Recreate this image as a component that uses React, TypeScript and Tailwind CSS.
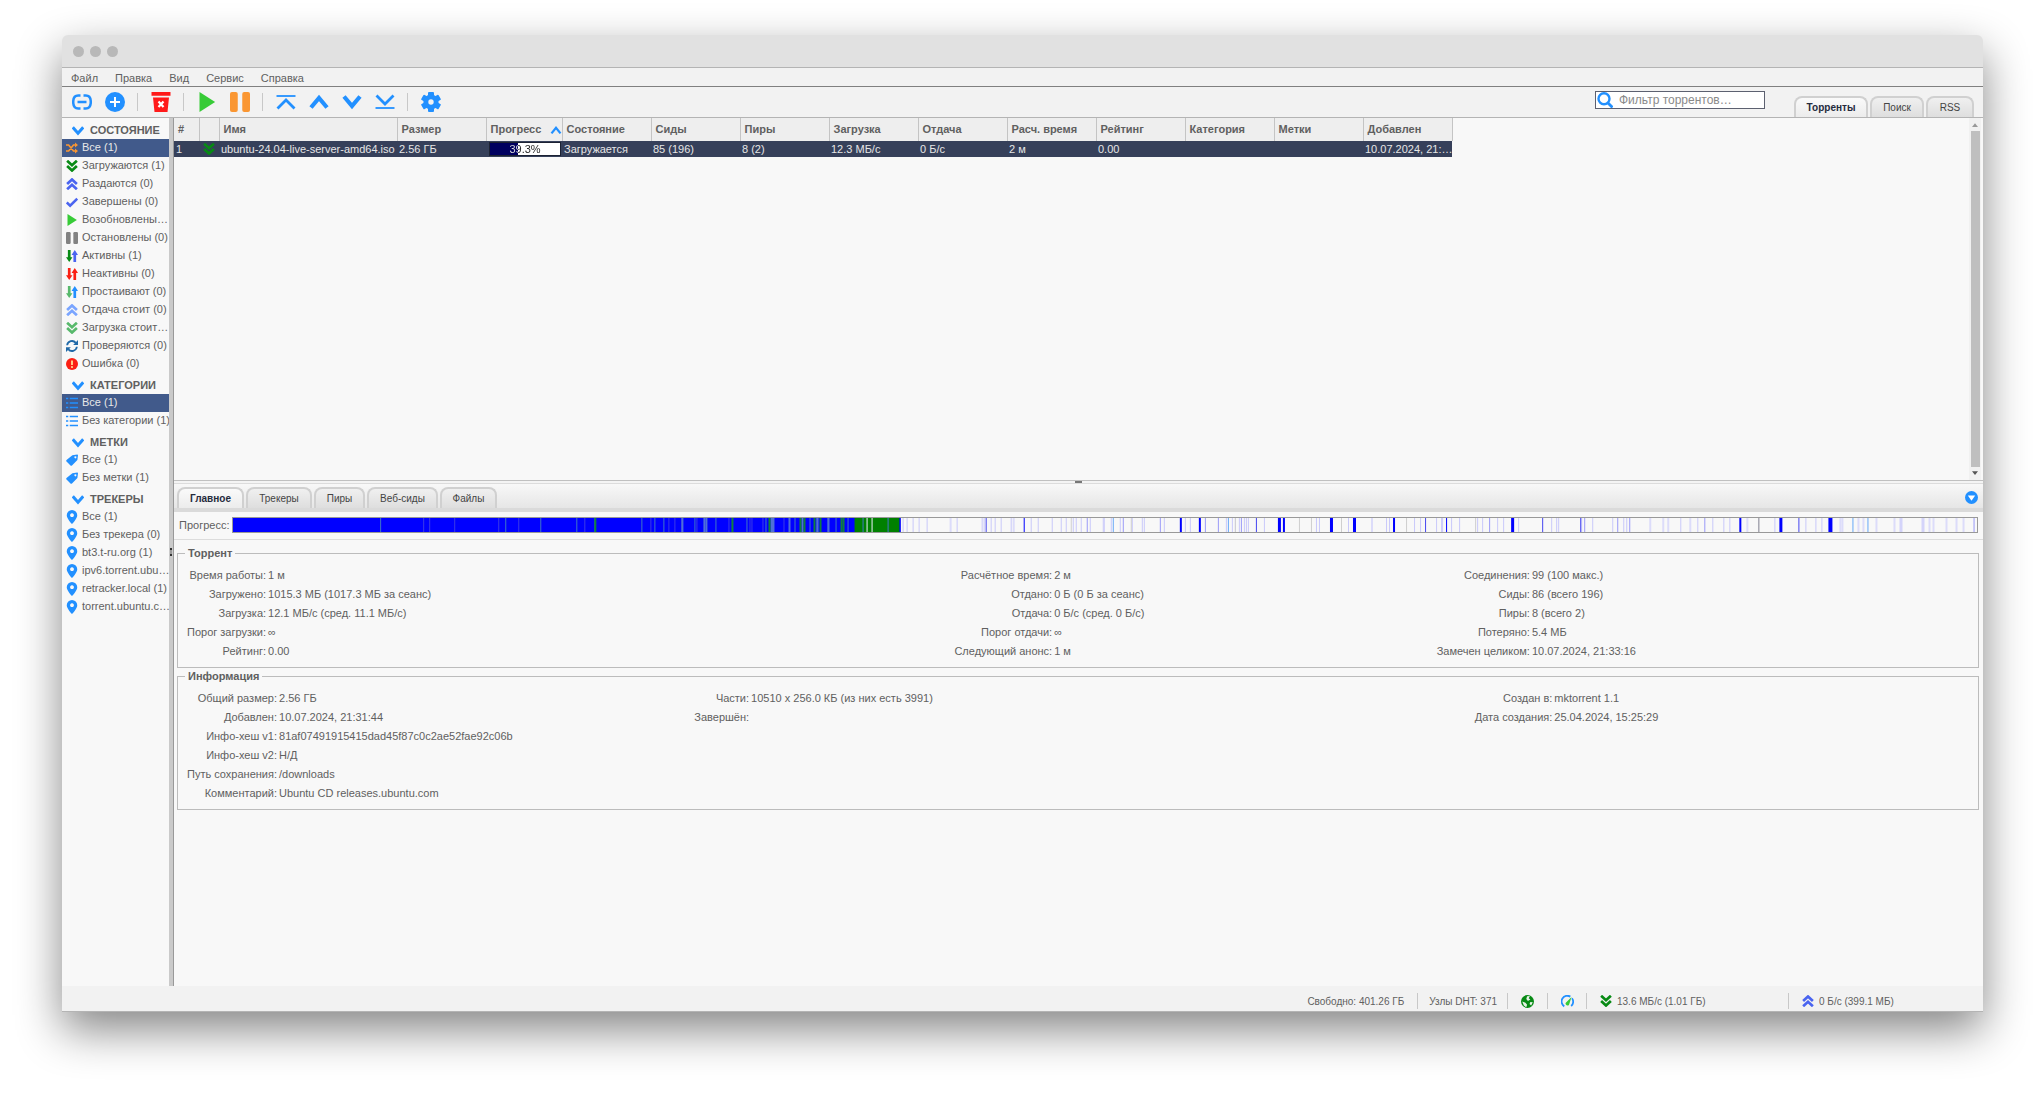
import type { ReactNode } from "react";
import clsx from "clsx";

/* ---------- icons ---------- */

function Svg({
  className,
  children,
  box = 16,
}: {
  className?: string;
  children: ReactNode;
  box?: number;
}) {
  return (
    <svg
      aria-hidden
      viewBox={`0 0 ${box} ${box}`}
      className={clsx("shrink-0", className)}
      fill="none"
    >
      {children}
    </svg>
  );
}

const BLUE = "#2290ff";

function Chevrons({ color, up }: { color: string; up?: boolean }) {
  return (
    <Svg className="h-3 w-3">
      <path
        d={
          up
            ? "M1.500 8 8 2l6.500 6M1.500 15 8 9l6.500 6"
            : "M1.500 1 8 7l6.500-6M1.500 8 8 14l6.500-6"
        }
        stroke={color}
        strokeWidth="3.600"
      />
    </Svg>
  );
}

function UpDown({ down, up }: { down: string; up: string }) {
  return (
    <Svg className="h-3 w-3">
      <path d="M2.500 0h3.600v9.500H8.600L4.300 16 0 9.500h2.500z" fill={down} />
      <path d="M9.900 16h3.600V6.500H16L11.700 0 7.400 6.500h2.500z" fill={up} />
    </Svg>
  );
}

function Play({ className = "h-3 w-3" }: { className?: string }) {
  return (
    <Svg className={className}>
      <path d="M2 0v16l12.500-8z" fill="#37cb37" />
    </Svg>
  );
}

function Pause({ color, className = "h-3 w-3" }: { color: string; className?: string }) {
  return (
    <Svg className={className}>
      <rect x="0" y="0" width="6.200" height="16" rx="1.600" fill={color} />
      <rect x="9.800" y="0" width="6.200" height="16" rx="1.600" fill={color} />
    </Svg>
  );
}

function Shuffle() {
  return (
    <Svg className="h-3 w-3">
      <path
        d="M0 4h3.500L10 12h3M0 12h3.500L10 4h3"
        stroke="#fa9632"
        strokeWidth="2.200"
      />
      <path d="M12 .8 16 4l-4 3.200zM12 8.800 16 12l-4 3.200z" fill="#fa9632" />
    </Svg>
  );
}

function Check() {
  return (
    <Svg className="h-3 w-3">
      <path d="M1 8.500 5.500 13 15 3.500" stroke="#4a64f0" strokeWidth="3.400" />
    </Svg>
  );
}

function Sync() {
  return (
    <Svg className="h-3 w-3">
      <path
        d="M1.500 7A6.500 6.500 0 0 1 13 3.800M14.500 9A6.500 6.500 0 0 1 3 12.200"
        stroke="#2069a8"
        strokeWidth="2.400"
      />
      <path d="M16 0v6.500H9.500zM0 16V9.500h6.500z" fill="#2069a8" />
    </Svg>
  );
}

function ErrorMark() {
  return (
    <Svg className="h-3 w-3">
      <circle cx="8" cy="8" r="8" fill="#fb2014" />
      <path d="M8 3.200v6" stroke="#fff0a0" strokeWidth="2.200" />
      <circle cx="8" cy="12" r="1.300" fill="#fff0a0" />
    </Svg>
  );
}

function List() {
  return (
    <Svg className="h-3 w-3">
      <path
        d="M0 2h3M5 2h11M0 8h3M5 8h11M0 14h3M5 14h11"
        stroke={BLUE}
        strokeWidth="2"
      />
    </Svg>
  );
}

function Tag() {
  return (
    <Svg className="h-3 w-3">
      <path
        fillRule="evenodd"
        d="M8.500 1.500 15 .8q1 0 1 1L15.200 8 8 15.200q-1 .8-2 0L.7 10q-.9-1 0-2zM12.500 3a1.300 1.300 0 1 0 .01 0z"
        fill={BLUE}
      />
    </Svg>
  );
}

function Pin() {
  return (
    <Svg className="-mx-px h-[14px] w-[14px]">
      <path
        fillRule="evenodd"
        d="M8 0a6 6 0 0 1 6 6c0 4-6 10-6 10S2 10 2 6a6 6 0 0 1 6-6zm0 3.700a2.200 2.200 0 1 0 .01 0z"
        fill={BLUE}
      />
    </Svg>
  );
}

function Globe() {
  return (
    <Svg className="h-[13px] w-[13px]">
      <circle cx="8" cy="8" r="8" fill="#078a14" />
      <path
        d="M7.500 1.500 11 1.200 9.500 4 11.500 5.500 8.500 7.500 6.500 5zM1.500 8l4 1.500 2 2.500-1 3-3-2zM11.500 8.500l3 .5-2 4-2-2z"
        fill="#e6f2e6"
      />
    </Svg>
  );
}

function Gauge() {
  return (
    <Svg className="h-[13px] w-[13px]">
      <path
        d="M4 14A6.800 6.800 0 0 1 11.500 2M13.500 4A6.800 6.800 0 0 1 12.500 13.500"
        stroke={BLUE}
        strokeWidth="2.200"
      />
      <path d="M13 2.500 10.200 11A2.200 2.200 0 1 1 6.500 9z" fill="#37cb37" />
    </Svg>
  );
}

function LinkIcon() {
  return (
    <Svg className="h-5 w-5" box={20}>
      <path
        d="M8.500 3.500H6.200Q1.200 3.500 1.200 10t5 6.500h2.300M11.500 3.500h2.300q5 0 5 6.500t-5 6.500h-2.300M5.500 10h9"
        stroke={BLUE}
        strokeWidth="2.500"
      />
    </Svg>
  );
}

function AddIcon() {
  return (
    <Svg className="h-5 w-5" box={20}>
      <circle cx="10" cy="10" r="10" fill={BLUE} />
      <path d="M10 5v10M5 10h10" stroke="#fff" strokeWidth="2" />
    </Svg>
  );
}

function TrashIcon() {
  return (
    <Svg className="h-5 w-5" box={20}>
      <path d="M.5 0h19v3.800H.5zM2 5.500h16L16.500 20h-13z" fill="#ff1a1a" />
      <path d="M7.500 9.500l5 5.500M12.500 9.500l-5 5.500" stroke="#fff" strokeWidth="2.200" />
    </Svg>
  );
}

function MoveIcon({ d, thin }: { d: string; thin?: string }) {
  return (
    <Svg className="h-5 w-5" box={20}>
      <path d={d} stroke={BLUE} strokeWidth={thin ? 2.8 : 4.2} />
      {thin && <path d={thin} stroke={BLUE} strokeWidth="1.800" />}
    </Svg>
  );
}

function GearIcon() {
  return (
    <Svg className="h-5 w-5" box={20}>
      <g fill={BLUE}>
        <rect x="7" y="0" width="6" height="20" rx="1" />
        <rect x="7" y="0" width="6" height="20" rx="1" transform="rotate(60 10 10)" />
        <rect x="7" y="0" width="6" height="20" rx="1" transform="rotate(120 10 10)" />
        <circle cx="10" cy="10" r="7.600" />
      </g>
      <circle cx="10" cy="10" r="2.700" fill="#f2f2f2" />
    </Svg>
  );
}

function SearchIcon() {
  return (
    <Svg className="ml-px h-4 w-4">
      <circle cx="7" cy="6.800" r="5.500" stroke={BLUE} strokeWidth="2.400" />
      <path d="M11 11l4.500 4.500" stroke={BLUE} strokeWidth="2.800" />
    </Svg>
  );
}

/* ---------- data ---------- */

type Item = { icon: ReactNode; label: string; selected?: boolean };

const filters: { title: string; items: Item[] }[] = [
  {
    title: "СОСТОЯНИЕ",
    items: [
      { icon: <Shuffle />, label: "Все (1)", selected: true },
      { icon: <Chevrons color="#078a14" />, label: "Загружаются (1)" },
      { icon: <Chevrons color="#4a64f0" up />, label: "Раздаются (0)" },
      { icon: <Check />, label: "Завершены (0)" },
      { icon: <Play />, label: "Возобновлены…" },
      { icon: <Pause color="#828282" />, label: "Остановлены (0)" },
      { icon: <UpDown down="#078a14" up="#4a64f0" />, label: "Активны (1)" },
      { icon: <UpDown down="#fb2014" up="#fb2014" />, label: "Неактивны (0)" },
      { icon: <UpDown down="#58b96c" up={BLUE} />, label: "Простаивают (0)" },
      { icon: <Chevrons color="#7aa5ff" up />, label: "Отдача стоит (0)" },
      { icon: <Chevrons color="#58b96c" />, label: "Загрузка стоит…" },
      { icon: <Sync />, label: "Проверяются (0)" },
      { icon: <ErrorMark />, label: "Ошибка (0)" },
    ],
  },
  {
    title: "КАТЕГОРИИ",
    items: [
      { icon: <List />, label: "Все (1)", selected: true },
      { icon: <List />, label: "Без категории (1)" },
    ],
  },
  {
    title: "МЕТКИ",
    items: [
      { icon: <Tag />, label: "Все (1)" },
      { icon: <Tag />, label: "Без метки (1)" },
    ],
  },
  {
    title: "ТРЕКЕРЫ",
    items: [
      { icon: <Pin />, label: "Все (1)" },
      { icon: <Pin />, label: "Без трекера (0)" },
      { icon: <Pin />, label: "bt3.t-ru.org (1)" },
      { icon: <Pin />, label: "ipv6.torrent.ubu…" },
      { icon: <Pin />, label: "retracker.local (1)" },
      { icon: <Pin />, label: "torrent.ubuntu.c…" },
    ],
  },
];

const toolbar: ({ label: string; icon: ReactNode } | null)[] = [
  { label: "Добавить ссылку", icon: <LinkIcon /> },
  { label: "Добавить файл", icon: <AddIcon /> },
  null,
  { label: "Удалить", icon: <TrashIcon /> },
  null,
  { label: "Возобновить", icon: <Play className="h-5 w-5" /> },
  { label: "Остановить", icon: <Pause color="#fa9632" className="h-5 w-5" /> },
  null,
  {
    label: "В начало очереди",
    icon: <MoveIcon d="M1.500 16.500 10 8l8.500 8.500" thin="M.5 4h19" />,
  },
  { label: "Вверх по очереди", icon: <MoveIcon d="M2 15.500 10 6l8 9.500" /> },
  { label: "Вниз по очереди", icon: <MoveIcon d="M2 4.500 10 14l8-9.500" /> },
  {
    label: "В конец очереди",
    icon: <MoveIcon d="M1.500 3.500 10 12l8.500-8.500" thin="M.5 16h19" />,
  },
  null,
  { label: "Настройки", icon: <GearIcon /> },
];

const columns: { title: string; value?: string }[] = [
  { title: "Сиды", value: "85 (196)" },
  { title: "Пиры", value: "8 (2)" },
  { title: "Загрузка", value: "12.3 МБ/с" },
  { title: "Отдача", value: "0 Б/с" },
  { title: "Расч. время", value: "2 м" },
  { title: "Рейтинг", value: "0.00" },
  { title: "Категория" },
  { title: "Метки" },
  { title: "Добавлен", value: "10.07.2024, 21:…" },
];

const torrentInfo: [string, string][][] = [
  [
    ["Время работы:", "1 м"],
    ["Загружено:", "1015.3 МБ (1017.3 МБ за сеанс)"],
    ["Загрузка:", "12.1 МБ/с (сред. 11.1 МБ/с)"],
    ["Порог загрузки:", "∞"],
    ["Рейтинг:", "0.00"],
  ],
  [
    ["Расчётное время:", "2 м"],
    ["Отдано:", "0 Б (0 Б за сеанс)"],
    ["Отдача:", "0 Б/с (сред. 0 Б/с)"],
    ["Порог отдачи:", "∞"],
    ["Следующий анонс:", "1 м"],
  ],
  [
    ["Соединения:", "99 (100 макс.)"],
    ["Сиды:", "86 (всего 196)"],
    ["Пиры:", "8 (всего 2)"],
    ["Потеряно:", "5.4 МБ"],
    ["Замечен целиком:", "10.07.2024, 21:33:16"],
  ],
];

const generalInfo: [string, string][][] = [
  [
    ["Общий размер:", "2.56 ГБ"],
    ["Добавлен:", "10.07.2024, 21:31:44"],
    ["Инфо-хеш v1:", "81af07491915415dad45f87c0c2ae52fae92c06b"],
    ["Инфо-хеш v2:", "Н/Д"],
    ["Путь сохранения:", "/downloads"],
    ["Комментарий:", "Ubuntu CD releases.ubuntu.com"],
  ],
  [
    ["Части:", "10510 x 256.0 КБ (из них есть 3991)"],
    ["Завершён:", ""],
  ],
  [
    ["Создан в:", "mktorrent 1.1"],
    ["Дата создания:", "25.04.2024, 15:25:29"],
  ],
];

// piece map: start positions grouped by colour and width, out of 1742
const pieces: { fill: string; width: number; at: number[] }[] = [
  { fill: "#0000ff", width: 667, at: [0] },
  { fill: "#008000", width: 45, at: [621] },
  {
    fill: "#3a3ae6",
    width: 1,
    at: [190, 196, 221, 265, 285, 351, 417, 435, 441, 448, 463, 495, 516, 518, 529, 550],
  },
  {
    fill: "#3f76c4",
    width: 1,
    at: [147, 272, 307, 343, 361, 408, 421, 430, 461, 482, 513, 532, 561, 576, 583, 594, 602, 614, 629, 654],
  },
  { fill: "#4f6fd8", width: 2, at: [448, 470, 472, 555, 568, 583, 594] },
  { fill: "#4f6fd8", width: 4, at: [537] },
  { fill: "#10803c", width: 2, at: [361, 498, 535, 566, 570, 580, 586, 607, 609] },
  { fill: "#f0f0ff", width: 1, at: [633, 638] },
  { fill: "#0000ff", width: 1, at: [666] },
  {
    fill: "#c9c9fa",
    width: 1,
    at: [
      669, 673, 679, 685, 693, 723, 748, 750, 757, 761, 767, 777, 797, 804, 818, 827,
      832, 839, 842, 847, 856, 869, 870, 877, 886, 898, 908, 910, 930, 951, 956, 992,
      998, 1001, 1005, 1010, 1012, 1014, 1030, 1082, 1085, 1114, 1152, 1155, 1180,
      1186, 1202, 1207, 1208, 1217, 1225, 1243, 1248, 1263, 1269, 1284, 1317, 1322,
      1324, 1347, 1358, 1378, 1389, 1392, 1446, 1463, 1478, 1489, 1495,
      1540, 1571, 1581, 1587,
    ],
  },
  {
    fill: "#dcdcfa",
    width: 2,
    at: [
      716, 779, 1137, 1415, 1428, 1433, 1455, 1512, 1605, 1607, 1623, 1628, 1641,
      1659, 1694, 1698, 1711, 1721, 1728,
    ],
  },
  { fill: "#d4d4fa", width: 3, at: [1665, 1687] },
  { fill: "#cfcfcf", width: 1, at: [837, 897, 1001, 1065, 1077, 1107, 1172, 1241] },
  {
    fill: "#9a9af8",
    width: 1,
    at: [853, 889, 926, 971, 984, 1007, 1255, 1350, 1383, 1395, 1470, 1739],
  },
  { fill: "#66a8f8", width: 1, at: [879, 994, 1618, 1633] },
  { fill: "#4646f0", width: 1, at: [752, 1022, 1191, 1308, 1346, 1564] },
  { fill: "#0000ff", width: 1, at: [790, 1212] },
  { fill: "#0000ff", width: 2, at: [946, 965, 1049, 1159, 1505] },
  { fill: "#0000ff", width: 3, at: [1044, 1096, 1119, 1277, 1545] },
  { fill: "#0000ff", width: 4, at: [1594] },
  { fill: "#808090", width: 1, at: [1524] },
];

/* ---------- parts ---------- */

function Tab({
  label,
  active,
  size,
}: {
  label: string;
  active?: boolean;
  size: string;
}) {
  return (
    <button
      type="button"
      role="tab"
      aria-selected={!!active}
      className={clsx(
        "rounded-t-lg border-2 border-b-0 text-center text-[10px] leading-3",
        size,
        active
          ? "border-[#d0d0d0] bg-linear-to-b from-[#fafafa] to-[#ececec] font-bold text-[#252b3d]"
          : "border-[#d0d0d0] bg-linear-to-b from-[#f0f0f0] to-[#dedede] text-[#444]"
      )}
    >
      {label}
    </button>
  );
}

function FilterSection({ title, items }: { title: string; items: Item[] }) {
  return (
    <section>
      <h2 className="flex h-[21px] items-center gap-[6px] pt-1 pl-[10px] text-[11px] font-bold">
        <Svg className="h-3 w-3">
          <path d="M1 3 8 11l7-8" stroke={BLUE} strokeWidth="4" />
        </Svg>
        {title}
      </h2>
      <ul>
        {items.map((item) => (
          <li key={item.label}>
            <a
              href="#"
              className={clsx(
                "flex h-[18px] items-center gap-1 pl-1 whitespace-nowrap",
                item.selected && "bg-[#415a8b] text-[#e8e8e8]"
              )}
            >
              {item.icon}
              <span className="pb-px">{item.label}</span>
            </a>
          </li>
        ))}
      </ul>
    </section>
  );
}

function InfoBox({
  title,
  groups,
  grid,
}: {
  title: string;
  groups: [string, string][][];
  grid: string;
}) {
  return (
    <fieldset className="border border-[#bcbcbc] pb-[6px]">
      <legend className="ml-[7px] px-[3px] text-[11px] leading-3 font-bold">
        {title}
      </legend>
      <div className={clsx("grid items-start pt-[7px] pl-[9px]", grid)}>
        {groups.map((rows, i) => (
          <dl
            key={i}
            className="grid grid-cols-[auto_1fr] gap-x-[2px] leading-[19px] whitespace-nowrap"
          >
            {rows.map(([term, value]) => (
              <div key={term} className="contents">
                <dt className="text-right">{term}</dt>
                <dd>{value}</dd>
              </div>
            ))}
          </dl>
        ))}
      </div>
    </fieldset>
  );
}

function ProgressCell({ percent }: { percent: number }) {
  return (
    <div
      className="mr-px ml-[3px] h-[14px] border border-[#1c2233]"
      style={{
        background: `linear-gradient(90deg, #00005f ${percent}%, #fff ${percent}%)`,
      }}
    >
      <span
        className="block bg-clip-text text-center leading-3 text-transparent"
        style={{
          backgroundImage: `linear-gradient(90deg, #e0e0e0 ${percent}%, #222 ${percent}%)`,
        }}
      >
        {percent}%
      </span>
    </div>
  );
}

function TorrentTable() {
  const th = "border-r border-[#c4c4c4] pl-1 text-left font-bold";
  return (
    <table className="table-fixed border-collapse self-start whitespace-nowrap">
      <thead>
        <tr className="h-[23px] bg-[#eee]">
          <th className={clsx(th, "w-[25px]")}>#</th>
          <th className={clsx(th, "w-5")} aria-label="Значок" />
          <th className={clsx(th, "w-[178px]")}>Имя</th>
          <th className={clsx(th, "w-[89px]")}>Размер</th>
          <th className={clsx(th, "w-[76px]")}>
            <span className="flex items-center justify-between">
              Прогресс
              <Svg className="h-3 w-3">
                <path d="M2 12.500 8 5l6 7.500" stroke={BLUE} strokeWidth="3" />
              </Svg>
            </span>
          </th>
          <th className={clsx(th, "w-[89px]")}>Состояние</th>
          {columns.map((c) => (
            <th key={c.title} className={clsx(th, "w-[89px]")}>
              {c.title}
            </th>
          ))}
        </tr>
      </thead>
      <tbody>
        <tr className="h-4 bg-[#36405a] leading-4 text-[#e6e6e6]">
          <td className="pl-[2px]">1</td>
          <td className="pl-1">
            <Chevrons color="#078a14" />
          </td>
          <td className="pl-[2px]">ubuntu-24.04-live-server-amd64.iso</td>
          <td className="pl-[2px]">2.56 ГБ</td>
          <td>
            <ProgressCell percent={39.3} />
          </td>
          <td className="pl-[2px]">Загружается</td>
          {columns.map((c) => (
            <td key={c.title} className="pl-[2px]">
              {c.value}
            </td>
          ))}
        </tr>
      </tbody>
    </table>
  );
}

function Scrollbar() {
  return (
    <div
      aria-hidden
      className="flex w-3 shrink-0 flex-col items-center justify-between bg-[#f1f1f1] py-1"
    >
      <Svg className="h-[6px] w-[6px]">
        <path d="M8 3l8 10H0z" fill="#999" />
      </Svg>
      <div className="my-[3px] w-[9px] flex-1 bg-[#bfbfbf]" />
      <Svg className="h-[6px] w-[6px]">
        <path d="M8 13 0 3h16z" fill="#555" />
      </Svg>
    </div>
  );
}

/* ---------- page ---------- */

export default function App() {
  return (
    <div className="flex min-h-screen flex-col bg-white pt-[35px] pr-[61px] pb-[88px] pl-[62px] font-['Liberation_Sans',Arial,sans-serif] text-[11px] text-[#606060]">
      <div className="flex flex-1 flex-col rounded-t-md bg-[#f2f2f2] shadow-[0_18px_45px_rgba(0,0,0,0.48)]">
        {/* Title bar */}
        <div className="flex h-[33px] items-center gap-[6px] rounded-t-md border-b border-[#b4b4b4] bg-[#e1e1e1] pl-[11px]">
          <span className="h-[11px] w-[11px] rounded-full bg-[#b8b8b8]" />
          <span className="h-[11px] w-[11px] rounded-full bg-[#b8b8b8]" />
          <span className="h-[11px] w-[11px] rounded-full bg-[#b8b8b8]" />
        </div>

        {/* Menu */}
        <nav className="flex h-[19px] items-center gap-[17px] border-b border-[#808080] pt-[2px] pl-[9px]">
          <a href="#">Файл</a>
          <a href="#">Правка</a>
          <a href="#">Вид</a>
          <a href="#">Сервис</a>
          <a href="#">Справка</a>
        </nav>

        {/* Toolbar */}
        <div className="flex h-[31px] justify-between border-b border-[#b4b4b4]">
          <div className="flex items-center pl-[3px]">
            {toolbar.map((entry, i) =>
              entry ? (
                <button
                  key={entry.label}
                  type="button"
                  aria-label={entry.label}
                  className="flex w-[33px] justify-center"
                >
                  {entry.icon}
                </button>
              ) : (
                <span key={i} className="mx-[6px] h-[18px] w-px bg-[#c8c8c8]" />
              )
            )}
          </div>
          <div className="flex items-end pr-[9px]">
            <label className="mr-[29px] mb-2 flex h-[18px] w-[170px] items-center border border-[#5c6070] bg-white">
              <SearchIcon />
              <input
                type="text"
                aria-label="Фильтр торрентов"
                placeholder="Фильтр торрентов…"
                className="ml-[6px] w-full min-w-0 text-xs outline-none placeholder:text-[#8a8a8a]"
              />
            </label>
            <div role="tablist" className="flex items-end gap-[2px]">
              <Tab label="Торренты" active size="h-[21px] w-[74px]" />
              <Tab label="Поиск" size="h-[21px] w-[54px]" />
              <Tab label="RSS" size="h-[21px] w-[48px]" />
            </div>
          </div>
        </div>

        <div className="flex flex-1 bg-[#f8f8f8]">
          {/* Filters */}
          <aside className="w-[107px] shrink-0">
            {filters.map((section) => (
              <FilterSection key={section.title} {...section} />
            ))}
          </aside>
          <div className="flex w-[5px] shrink-0 flex-col items-center justify-center border-r border-[#999] bg-[#cacaca]">
            <span className="h-2 w-[2px] border-y-2 border-[#333] bg-[#999]" />
          </div>

          <main className="flex min-w-0 flex-1 flex-col">
            <div className="flex flex-[362] justify-between border-b border-[#c0c0c0]">
              <TorrentTable />
              <div className="flex pr-[2px]">
                <Scrollbar />
              </div>
            </div>

            <div className="flex flex-[505] flex-col">
              <div className="flex h-[3px] justify-center border-b border-[#dcdcdc] bg-[#f4f4f4]">
                <span className="h-[2px] w-[7px] bg-[#777]" />
              </div>
              <div className="flex h-7 items-end justify-between border-b-4 border-[#dadada] bg-linear-to-b from-[#f8f8f8] to-[#e6e6e6] pr-[5px] pl-[3px]">
                <div role="tablist" className="flex items-end gap-[2px]">
                  <Tab label="Главное" active size="h-[21px] w-[67px]" />
                  <Tab label="Трекеры" size="h-[21px] w-[66px]" />
                  <Tab label="Пиры" size="h-[21px] w-[51px]" />
                  <Tab label="Веб-сиды" size="h-[21px] w-[71px]" />
                  <Tab label="Файлы" size="h-[21px] w-[57px]" />
                </div>
                <button type="button" aria-label="Свернуть" className="pb-1">
                  <Svg className="h-[13px] w-[13px]">
                    <circle cx="8" cy="8" r="8" fill={BLUE} />
                    <path d="M3.500 5.500h9L8 12z" fill="#fff" />
                  </Svg>
                </button>
              </div>

              <div className="flex h-7 items-center gap-[3px] border-b border-[#dcdcdc] pr-[5px] pb-px pl-[5px]">
                <span>Прогресс:</span>
                <svg
                  role="img"
                  aria-label="Прогресс"
                  viewBox="0 0 1742 14"
                  preserveAspectRatio="none"
                  className="h-4 min-w-0 flex-1 border border-[#999] bg-[#f8f8f8]"
                >
                  {pieces.map((group, g) =>
                    group.at.map((x) => (
                      <rect
                        key={`${g}-${x}`}
                        x={x}
                        y="0"
                        width={group.width}
                        height="14"
                        fill={group.fill}
                      />
                    ))
                  )}
                </svg>
              </div>

              <div className="flex flex-col gap-[2px] pt-[7px] pr-1 pl-[3px]">
                <InfoBox
                  title="Торрент"
                  groups={torrentInfo}
                  grid="grid-cols-[767fr_482fr_541fr]"
                />
                <InfoBox
                  title="Информация"
                  groups={generalInfo}
                  grid="grid-cols-[507fr_780fr_503fr]"
                />
              </div>
            </div>
          </main>
        </div>

        {/* Status bar */}
        <footer className="flex h-[26px] items-center justify-end border-b border-[#b4b4b4] pt-[5px] text-[10px]">
          <span className="pr-[13px]">Свободно: 401.26 ГБ</span>
          <span className="flex h-4 items-center border-l border-[#c8c8c8] pr-[10px] pl-[11px]">
            Узлы DHT: 371
          </span>
          <span className="flex h-4 w-10 items-center justify-center border-l border-[#c8c8c8]">
            <Globe />
          </span>
          <span className="flex h-4 w-[39px] items-center justify-center border-l border-[#c8c8c8]">
            <Gauge />
          </span>
          <span className="flex h-4 w-[202px] items-center gap-[5px] border-l border-[#c8c8c8] pl-[13px]">
            <Chevrons color="#078a14" />
            13.6 МБ/с (1.01 ГБ)
          </span>
          <span className="flex h-4 w-[195px] items-center gap-[5px] border-l border-[#c8c8c8] pl-[13px]">
            <Chevrons color="#4a64f0" up />
            0 Б/с (399.1 МБ)
          </span>
        </footer>
      </div>
    </div>
  );
}
